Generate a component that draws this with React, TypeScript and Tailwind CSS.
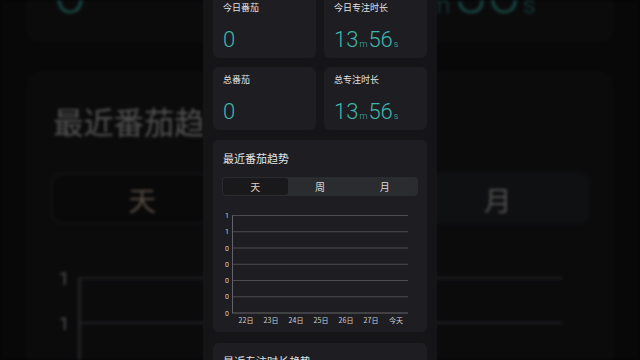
import React from "react";

const days = ["22日", "23日", "24日", "25日", "26日", "27日", "今天"];
const yLabels = ["1", "1", "0", "0", "0", "0", "0"];

function StatCard({ label, children }: { label: string; children: React.ReactNode }) {
  return (
    <div className="h-[63px] rounded-[6px] bg-[#1e1e22] pl-[10px] pt-[7px] flex flex-col">
      <div className="text-[9px] leading-[12px] text-[#e2e2e2]">{label}</div>
      <div className="mt-[13px] h-[26px] flex items-baseline font-['Roboto',sans-serif] font-light text-[#3fb6aa]">
        {children}
      </div>
    </div>
  );
}

function Duration() {
  return (
    <>
      <span className="text-[22px] leading-[26px]">13</span>
      <span className="text-[9px] mx-[1px]">m</span>
      <span className="text-[22px] leading-[26px]">56</span>
      <span className="text-[9px] ml-[1px]">s</span>
    </>
  );
}

function Chart() {
  const ys = yLabels.map((_, i) => 15.5 + i * 16.25);
  return (
    <svg width="215" height="128" className="block">
      {ys.map((y, i) => (
        <line key={i} x1="19" x2="195" y1={y} y2={y} stroke={i === ys.length - 1 ? "#626268" : "#4b4b50"} strokeWidth="1" />
      ))}
      <line x1="19.5" x2="19.5" y1="15.5" y2="113" stroke="#626268" strokeWidth="1" />
      {yLabels.map((t, i) => (
        <text key={i} x="14" y={ys[i] + 2.5} fontSize="7" fill="#cfcfcf" textAnchor="middle" fontFamily="Roboto, sans-serif">
          {t}
        </text>
      ))}
      {days.map((d, i) => (
        <text key={d} x={33 + i * 25} y="122.5" fontSize="7" fill="#cfcfcf" textAnchor="middle" fontFamily="'Noto Sans CJK SC', sans-serif">
          {d}
        </text>
      ))}
    </svg>
  );
}

function Screen() {
  return (
    <div className="w-[234px] h-[360px] overflow-hidden bg-[#151518] font-['Noto_Sans_CJK_SC',sans-serif]">
      <div className="-mt-[5px] px-[10px] flex flex-col">
        <div className="grid grid-cols-2 gap-x-[8px] gap-y-[9px]">
          <StatCard label="今日番茄">
            <span className="text-[22px] leading-[26px]">0</span>
          </StatCard>
          <StatCard label="今日专注时长">
            <Duration />
          </StatCard>
          <StatCard label="总番茄">
            <span className="text-[22px] leading-[26px]">0</span>
          </StatCard>
          <StatCard label="总专注时长">
            <Duration />
          </StatCard>
        </div>

        <div className="mt-[10px] h-[192px] rounded-[6px] bg-[#1e1e22] flex flex-col">
          <div className="pl-[10px] pt-[11px] text-[11px] leading-[14px] text-[#e2e2e2]">最近番茄趋势</div>
          <div className="mt-[12px] ml-[9px] w-[196px] h-[19px] rounded-[4px] bg-[#2b2c30] p-[1px] flex">
            <div className="flex-1 rounded-[3px] bg-[#19191c] flex items-center justify-center text-[10px] text-[#e8cdb5]">天</div>
            <div className="flex-1 flex items-center justify-center text-[10px] text-[#dcdcdc]">周</div>
            <div className="flex-1 flex items-center justify-center text-[10px] text-[#dcdcdc]">月</div>
          </div>
          <div className="mt-[4px]">
            <Chart />
          </div>
        </div>

        <div className="mt-[11px] h-[120px] rounded-[6px] bg-[#1e1e22]">
          <div className="pl-[10px] pt-[11px] text-[11px] leading-[14px] text-[#e2e2e2]">最近专注时长趋势</div>
        </div>
      </div>
    </div>
  );
}

export default function App() {
  return (
    <div className="relative w-[640px] h-[360px] overflow-hidden bg-[#050506]">
      <div className="absolute inset-0 overflow-hidden blur-[1.5px] brightness-[0.36]">
        <div className="absolute left-0 top-0 origin-top-left [transform:translate(-1.75px,-314.5px)_scale(2.75)]">
          <Screen />
        </div>
      </div>
      <div className="relative z-10 mx-auto w-[234px] h-[360px]">
        <Screen />
      </div>
    </div>
  );
}
